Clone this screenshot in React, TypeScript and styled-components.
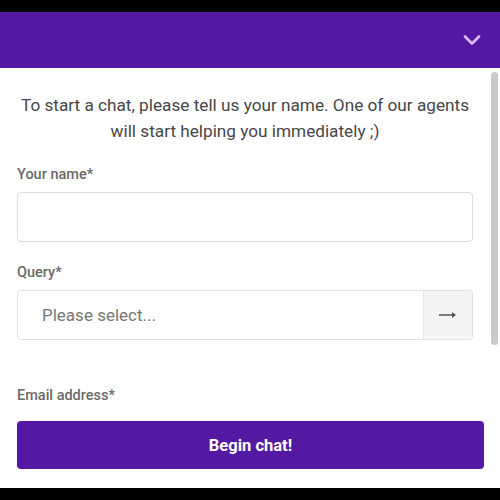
import React from 'react';
import styled, { createGlobalStyle } from 'styled-components';
import { ChevronDown } from 'lucide-react';

const GlobalStyle = createGlobalStyle`
  html, body {
    margin: 0;
    padding: 0;
    background: #000;
    font-family: Roboto, 'Liberation Sans', sans-serif;
  }
`;

const Widget = styled.div`
  width: 500px;
  height: 500px;
  padding: 12px 0;
  box-sizing: border-box;
  display: flex;
  flex-direction: column;
`;

const Header = styled.div`
  height: 56px;
  background: #541aa3;
  display: flex;
  align-items: center;
  justify-content: flex-end;
  padding: 0 14px;
  color: #d9b6f6;
`;

const Panel = styled.div`
  flex: 1;
  background: #fff;
  display: flex;
  flex-direction: column;
  min-height: 0;
`;

const ScrollArea = styled.div`
  height: 342px;
  display: flex;
`;

const ScrollContent = styled.div`
  flex: 1;
  overflow: hidden;
  padding: 24px 17px 33px;
`;

const ScrollTrack = styled.div`
  width: 10px;
  padding: 4px 2px 0 1px;
  box-sizing: border-box;
`;

const ScrollThumb = styled.div`
  height: 273px;
  background: #c9c9c9;
  border-radius: 4px;
`;

const Intro = styled.p`
  margin: 0 -8px 21px;
  text-align: center;
  font-size: 17.2px;
  line-height: 26px;
  color: #474747;
`;

const Field = styled.div<{ $gap?: number }>`
  margin-bottom: ${p => p.$gap ?? 21}px;
`;

const Label = styled.label`
  display: block;
  font-size: 14.5px;
  line-height: 20px;
  font-weight: 500;
  color: #6a6a6a;
  margin-bottom: 7px;
`;

const TextInput = styled.input`
  display: block;
  width: 100%;
  height: 50px;
  box-sizing: border-box;
  border: 1px solid #dcdcdc;
  border-radius: 4px;
  padding: 0 16px;
  font: inherit;
  font-size: 17px;
  outline: none;
`;

const Select = styled.div`
  display: flex;
  height: 48px;
  border: 1px solid #e2e2e2;
  border-radius: 4px;
  overflow: hidden;
`;

const SelectValue = styled.div`
  flex: 1;
  display: flex;
  align-items: center;
  padding-left: 24px;
  font-size: 17px;
  color: #777;
`;

const SelectButton = styled.div`
  width: 48px;
  background: #f4f4f4;
  border-left: 1px solid #e6e6e6;
  display: flex;
  align-items: center;
  justify-content: center;
`;

const Footer = styled.div`
  padding: 11px 16px 19px 17px;
`;

const BeginButton = styled.button`
  display: block;
  width: 100%;
  height: 48px;
  border: none;
  border-radius: 4px;
  background: #5419a2;
  color: #fff;
  font-family: inherit;
  font-size: 16.5px;
  font-weight: 700;
  cursor: pointer;
`;

const Arrow = () => (
  <svg width="19" height="8" viewBox="0 0 19 8">
    <path d="M0 4h16" stroke="#555" strokeWidth="1.6" />
    <path d="M13 1l4 3-4 3z" fill="#555" />
  </svg>
);

export default function App() {
  return (
    <>
      <GlobalStyle />
      <Widget>
        <Header>
          <ChevronDown size={28} strokeWidth={2.4} />
        </Header>
        <Panel>
          <ScrollArea>
            <ScrollContent>
              <Intro>
                To start a chat, please tell us your name. One of our agents will start helping you immediately ;)
              </Intro>
              <Field>
                <Label>Your name*</Label>
                <TextInput type="text" />
              </Field>
              <Field $gap={46}>
                <Label>Query*</Label>
                <Select>
                  <SelectValue>Please select...</SelectValue>
                  <SelectButton>
                    <Arrow />
                  </SelectButton>
                </Select>
              </Field>
              <Field $gap={0}>
                <Label>Email address*</Label>
                <TextInput type="email" />
              </Field>
            </ScrollContent>
            <ScrollTrack>
              <ScrollThumb />
            </ScrollTrack>
          </ScrollArea>
          <Footer>
            <BeginButton>Begin chat!</BeginButton>
          </Footer>
        </Panel>
      </Widget>
    </>
  );
}
